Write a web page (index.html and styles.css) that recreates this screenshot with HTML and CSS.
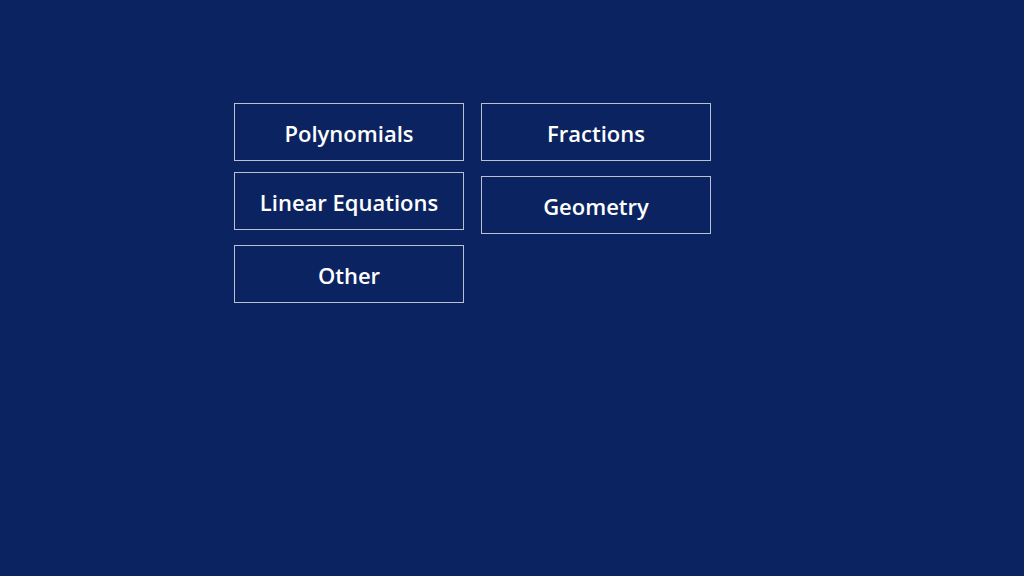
FILE: index.html
```html
<!DOCTYPE html>
<html>
<head>
<meta charset="utf-8">
<link rel="stylesheet" href="styles.css">
</head>
<body>
<div class="page">
  <div class="col">
    <div class="btn">Polynomials</div>
    <div class="btn gap-sm">Linear Equations</div>
    <div class="btn gap-md">Other</div>
  </div>
  <div class="col">
    <div class="btn">Fractions</div>
    <div class="btn gap-md">Geometry</div>
  </div>
</div>
</body>
</html>
```
FILE: styles.css
```css
html, body {
  margin: 0;
  padding: 0;
  background: #0b2461;
  width: 1024px;
  height: 576px;
  overflow: hidden;
}
.page {
  box-sizing: border-box;
  width: 1024px;
  height: 576px;
  padding: 103px 0 0 234px;
  display: flex;
  align-items: flex-start;
  gap: 17px;
}
.col {
  display: flex;
  flex-direction: column;
}
.btn {
  box-sizing: border-box;
  width: 230px;
  height: 58px;
  border: 1px solid #b9c0d2;
  display: flex;
  align-items: center;
  justify-content: center;
  color: #ffffff;
  font-family: "Open Sans", "Noto Sans", sans-serif;
  font-weight: 600;
  font-size: 22px;
  padding-top: 2px;
}
.gap-sm { margin-top: 11px; }
.gap-md { margin-top: 15px; }
```
